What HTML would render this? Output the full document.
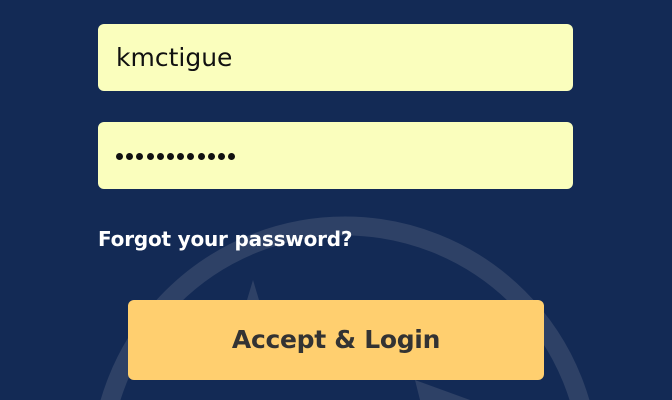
<!DOCTYPE html>
<html><head><meta charset="utf-8"><style>
html,body{margin:0;padding:0;overflow:hidden}
body{width:672px;height:400px;background:#132a55;position:relative;overflow:hidden;font-family:"DejaVu Sans","Liberation Sans",sans-serif}
.in{position:absolute;left:98px;width:475px;height:67px;background:#fafebd;border-radius:6px;box-sizing:border-box;padding-left:18px;line-height:67px;color:#111;font-size:25px}
.fg{position:absolute;left:98px;top:227px;color:#fff;font-weight:bold;font-size:20px;letter-spacing:-0.2px}
.btn{position:absolute;left:128px;top:300px;width:416px;height:80px;background:#ffcf6f;border-radius:6px;text-align:center;line-height:80px;font-weight:bold;font-size:25px;color:#333;letter-spacing:-0.3px}
svg{position:absolute;left:0;top:0;display:block}
.dots{position:absolute;left:116px;top:153px;display:flex;height:7px}
.dots i{display:block;width:7px;height:7px;border-radius:50%;background:#111;margin-right:3.2px}
</style></head><body>
<svg width="672" height="400"><circle cx="345" cy="471" r="245" fill="none" stroke="#2e4166" stroke-width="19"/>
<polygon points="253,280 268,330 238,330" fill="#2e4166"/>
<polygon points="415,380 470,400 420,400" fill="#2e4166"/></svg>
<div class="in" style="top:24px">kmctigue</div>
<div class="in" style="top:122px"></div>
<div class="dots"><i></i><i></i><i></i><i></i><i></i><i></i><i></i><i></i><i></i><i></i><i></i><i></i></div>
<div class="fg">Forgot your password?</div>
<div class="btn">Accept &amp; Login</div>
</body></html>
